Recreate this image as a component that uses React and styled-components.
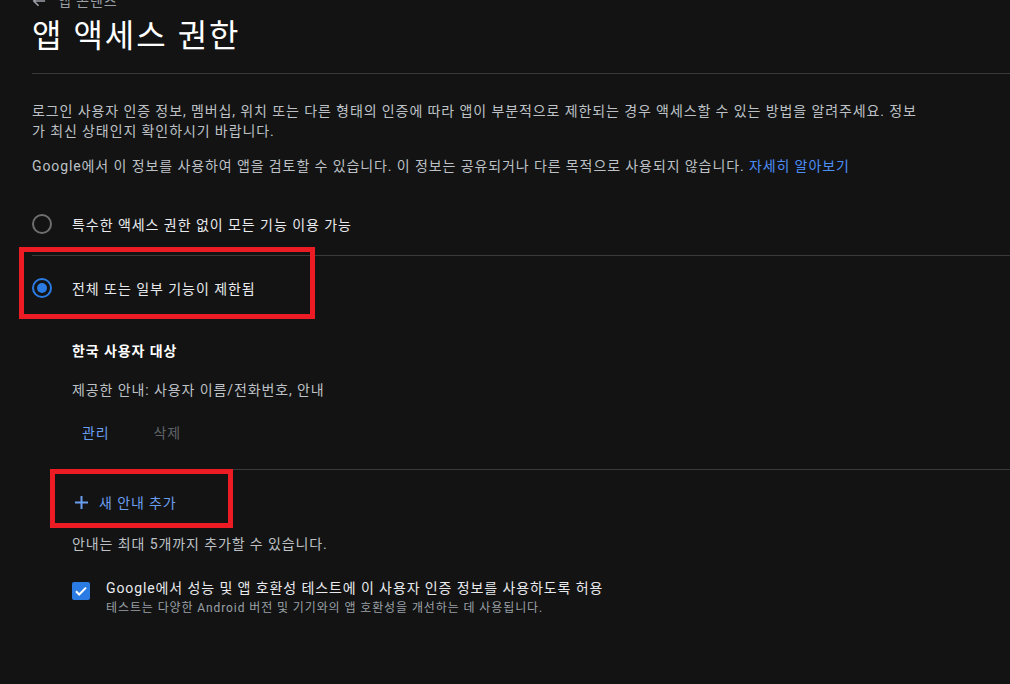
import React from "react";
import styled, { createGlobalStyle } from "styled-components";

const GlobalStyle = createGlobalStyle`
  html, body { margin: 0; padding: 0; background: #131313; }
  body {
    font-family: Roboto, "Noto Sans CJK KR", "Noto Sans", sans-serif;
    color: #e8eaed;
    overflow: hidden;
  }
  * { box-sizing: border-box; }
`;

const Page = styled.main`
  width: 1010px;
  height: 684px;
  padding-left: 32px;
  background: #131313;
`;

const Breadcrumb = styled.div`
  display: flex;
  align-items: center;
  gap: 12px;
  height: 20px;
  margin-top: -9px;
  color: #9aa0a6;
  font-size: 14px;
  line-height: 20px;
  letter-spacing: 0.9px;
`;

const Header = styled.header`
  padding-top: 5px;
  padding-bottom: 17px;
  border-bottom: 1px solid #3a3a3a;
`;

const Title = styled.h1`
  margin: 0;
  font-size: 32px;
  line-height: 40px;
  font-weight: 400;
  letter-spacing: 2px;
  color: #ffffff;
`;

const Paragraph = styled.p`
  margin: ${(p) => p.$top}px 0 0;
  max-width: 896px;
  font-size: 14px;
  line-height: 20px;
  letter-spacing: 0.9px;
  color: #bdc1c6;
`;

const Link = styled.a`
  color: #4d8df6;
  text-decoration: none;
`;

const OptionRow = styled.label`
  position: relative;
  display: flex;
  align-items: center;
  gap: 20px;
  height: ${(p) => p.$h}px;
  margin-top: ${(p) => p.$top || 0}px;
  border-bottom: ${(p) => (p.$divider ? "1px solid #3a3a3a" : "none")};
  font-size: 14px;
  letter-spacing: 0.95px;
  color: #e8eaed;
`;

const Radio = styled.span`
  width: 20px;
  height: 20px;
  border-radius: 50%;
  border: 2px solid ${(p) => (p.$checked ? "#2a7be4" : "#6f6f6f")};
  display: flex;
  align-items: center;
  justify-content: center;
  flex-shrink: 0;
  &::after {
    content: "";
    display: ${(p) => (p.$checked ? "block" : "none")};
    width: 10px;
    height: 10px;
    border-radius: 50%;
    background: #2a7be4;
  }
`;

const Highlight = styled.span`
  position: absolute;
  left: ${(p) => p.$l}px;
  top: ${(p) => p.$t}px;
  width: ${(p) => p.$w}px;
  height: ${(p) => p.$h}px;
  border: 5px solid #ed1c24;
  pointer-events: none;
`;

const Nested = styled.section`
  padding-left: 40px;
`;

const GroupTitle = styled.div`
  margin-top: 21px;
  font-size: 14px;
  line-height: 20px;
  font-weight: 700;
  letter-spacing: 0.9px;
  color: #ffffff;
`;

const Meta = styled.div`
  margin-top: ${(p) => p.$top}px;
  font-size: 14px;
  line-height: 20px;
  letter-spacing: 0.9px;
  color: #bdc1c6;
`;

const Actions = styled.div`
  display: flex;
  gap: 24px;
  margin-top: 14px;
  padding-bottom: 19px;
  border-bottom: 1px solid #3a3a3a;
`;

const TextButton = styled.button`
  position: relative;
  display: flex;
  align-items: center;
  gap: 11px;
  height: 36px;
  padding: 0 ${(p) => p.$px}px;
  margin-top: ${(p) => p.$top || 0}px;
  border: none;
  background: transparent;
  font-family: inherit;
  font-size: 14px;
  letter-spacing: 0.9px;
  color: ${(p) => (p.$disabled ? "#5f6368" : "#6a9ef0")};
  cursor: pointer;
`;

const CheckRow = styled.div`
  display: flex;
  gap: 16px;
  margin-top: 24px;
`;

const Checkbox = styled.span`
  width: 18px;
  height: 18px;
  margin-top: 4px;
  border-radius: 2px;
  background: #2a7be4;
  display: flex;
  align-items: center;
  justify-content: center;
  flex-shrink: 0;
`;

const CheckText = styled.div`
  display: flex;
  flex-direction: column;
`;

const CheckLabel = styled.div`
  font-size: 14px;
  line-height: 20px;
  letter-spacing: 0.9px;
  color: #e8eaed;
`;

const CheckHint = styled.div`
  margin-top: 2px;
  font-size: 12px;
  line-height: 16px;
  letter-spacing: 0.9px;
  color: #9aa0a6;
`;

export default function App() {
  return (
    <>
      <GlobalStyle />
      <Page>
        <Breadcrumb>
          <svg width="14" height="14" viewBox="0 0 16 16">
            <path d="M15 8H2M7.5 2.5L2 8l5.5 5.5" fill="none" stroke="#9aa0a6" strokeWidth="1.8" />
          </svg>
          <span>앱 콘텐츠</span>
        </Breadcrumb>
        <Header>
          <Title>앱 액세스 권한</Title>
        </Header>
        <Paragraph $top={27}>
          로그인 사용자 인증 정보, 멤버십, 위치 또는 다른 형태의 인증에 따라 앱이 부분적으로 제한되는 경우 액세스할 수 있는 방법을 알려주세요. 정보가 최신 상태인지 확인하시기 바랍니다.
        </Paragraph>
        <Paragraph $top={15}>
          Google에서 이 정보를 사용하여 앱을 검토할 수 있습니다. 이 정보는 공유되거나 다른 목적으로 사용되지 않습니다. <Link href="#">자세히 알아보기</Link>
        </Paragraph>
        <OptionRow $h={64} $top={16} $divider>
          <Radio />
          <span>특수한 액세스 권한 없이 모든 기능 이용 가능</span>
        </OptionRow>
        <OptionRow $h={64}>
          <Radio $checked />
          <span>전체 또는 일부 기능이 제한됨</span>
          <Highlight $l={-13} $t={-9} $w={296} $h={72} />
        </OptionRow>
        <Nested>
          <GroupTitle>한국 사용자 대상</GroupTitle>
          <Meta $top={19}>제공한 안내: 사용자 이름/전화번호, 안내</Meta>
          <Actions>
            <TextButton $px={10}>관리</TextButton>
            <TextButton $px={10} $disabled>삭제</TextButton>
          </Actions>
          <TextButton $px={3} $top={14}>
            <svg width="13" height="13" viewBox="0 0 13 13">
              <path d="M6.5 0v13M0 6.5h13" stroke="#6a9ef0" strokeWidth="2" />
            </svg>
            <span>새 안내 추가</span>
            <Highlight $l={-22} $t={-15} $w={183} $h={59} />
          </TextButton>
          <Meta $top={14}>안내는 최대 5개까지 추가할 수 있습니다.</Meta>
          <CheckRow>
            <Checkbox>
              <svg width="14" height="14" viewBox="0 0 14 14">
                <path d="M2 7.3l3.2 3.2L12 3.6" fill="none" stroke="#ffffff" strokeWidth="2" />
              </svg>
            </Checkbox>
            <CheckText>
              <CheckLabel>Google에서 성능 및 앱 호환성 테스트에 이 사용자 인증 정보를 사용하도록 허용</CheckLabel>
              <CheckHint>테스트는 다양한 Android 버전 및 기기와의 앱 호환성을 개선하는 데 사용됩니다.</CheckHint>
            </CheckText>
          </CheckRow>
        </Nested>
      </Page>
    </>
  );
}
